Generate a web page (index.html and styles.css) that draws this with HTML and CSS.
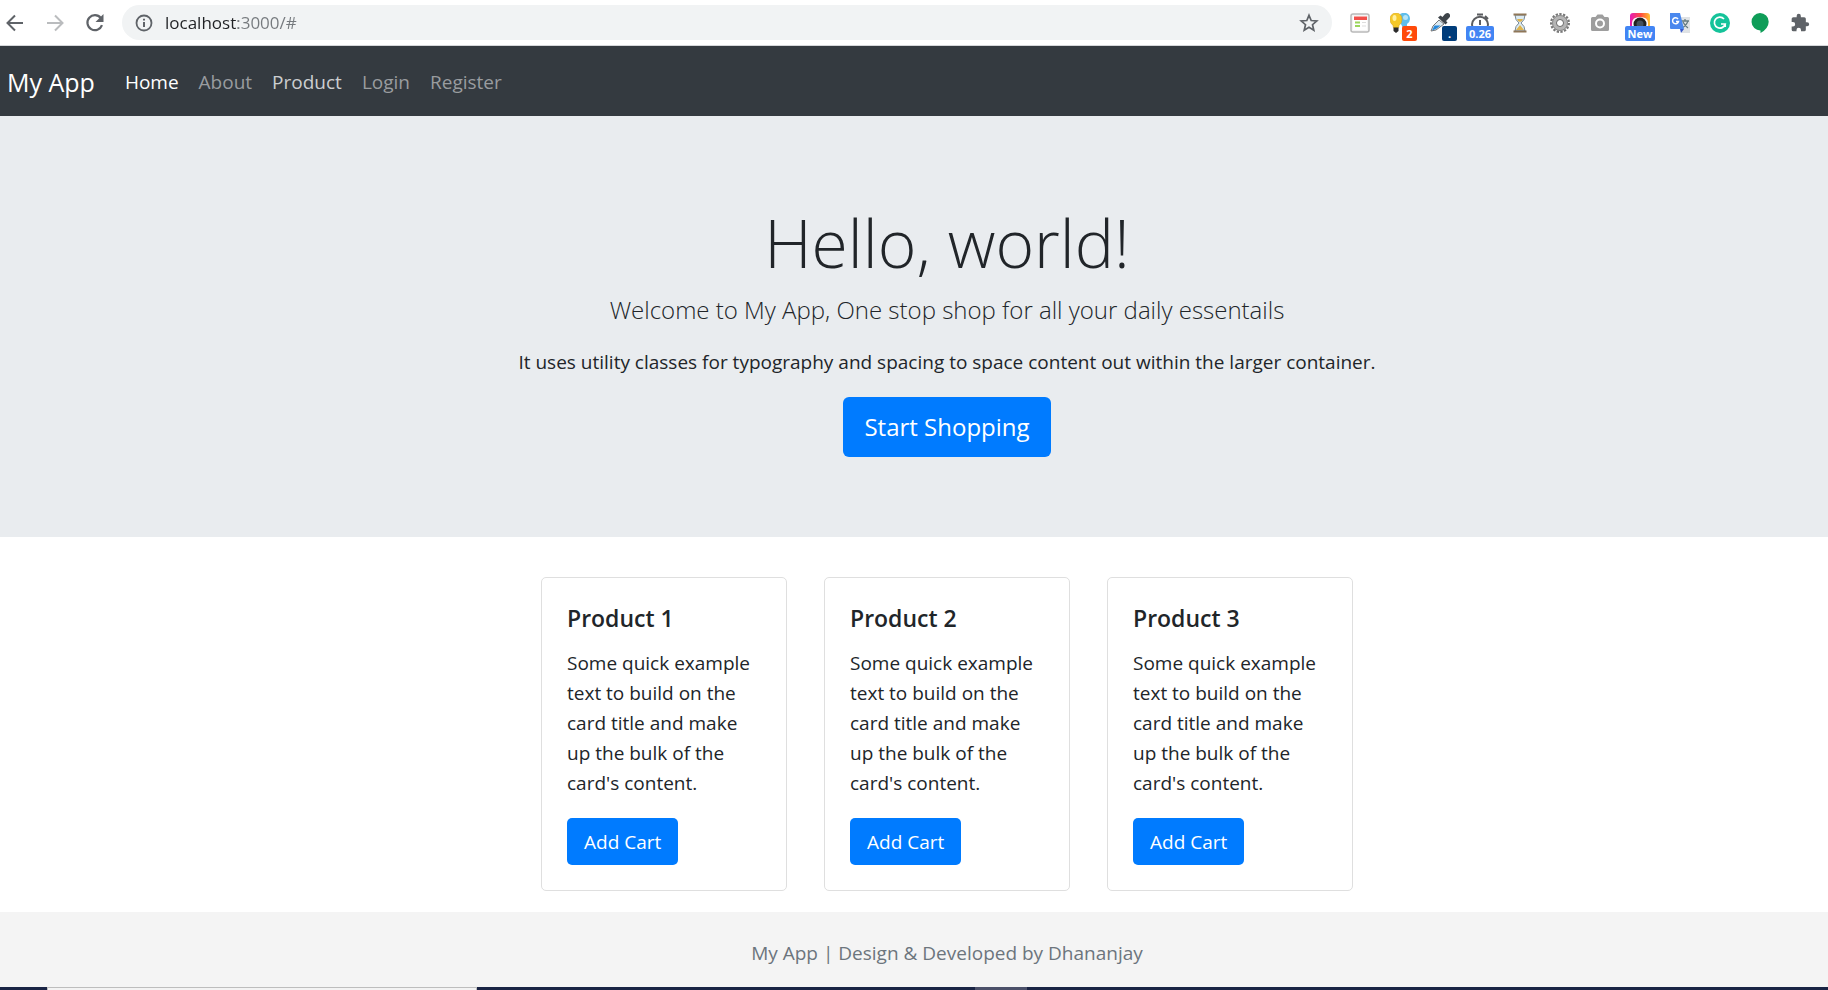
FILE: index.html
```html
<!DOCTYPE html>
<html lang="en">
<head>
<meta charset="utf-8">
<title>My App</title>
<link rel="stylesheet" href="styles.css">
</head>
<body>
<div class="toolbar">
  <div class="history">
    <button class="tool" aria-label="Back"><svg width="20" height="20" viewBox="0 0 20 20" fill="none" stroke="#5f6368" stroke-width="2"><path d="M18 10H3M10 2.500L2.500 10L10 17.500"/></svg></button>
    <button class="tool" aria-label="Forward" disabled><svg width="20" height="20" viewBox="0 0 20 20" fill="none" stroke="#babcbe" stroke-width="2"><path d="M2 10H17M10 2.500L17.500 10L10 17.500"/></svg></button>
    <button class="tool" aria-label="Reload"><svg width="20" height="20" viewBox="0 0 20 20"><path d="M15.800 5A7.500 7.500 0 1 0 17 12.200" fill="none" stroke="#5f6368" stroke-width="2.200"/><path d="M18.500 1V9H10.500Z" fill="#5f6368"/></svg></button>
  </div>
  <div class="omnibox">
    <button class="site-info" aria-label="Site information"><svg width="18" height="18" viewBox="0 0 18 18"><circle cx="9" cy="9" r="7.500" fill="none" stroke="#5f6368" stroke-width="1.800"/><path d="M9 8V13M9 4.800V6.600" stroke="#5f6368" stroke-width="2"/></svg></button>
    <input class="url" type="text" aria-label="Address" value="localhost:3000/#">
    <button class="site-info" aria-label="Bookmark"><svg width="20" height="20" viewBox="0 0 20 20"><path d="M10 2.300L12.200 7.500L17.800 8L13.500 11.700L14.800 17.200L10 14.300L5.200 17.200L6.500 11.700L2.200 8L7.800 7.500Z" fill="none" stroke="#5f6368" stroke-width="1.700"/></svg></button>
  </div>
  <div class="extensions">
    <button class="ext" aria-label="Notes"><svg width="20" height="20" viewBox="0 0 20 20"><rect x="1" y="1" width="18" height="18" rx="2" fill="#f4f4f4" stroke="#b9b9b9" stroke-width="1.500"/><rect x="3" y="3" width="14" height="14" fill="#fff"/><path d="M4 3.500H17V7H4Z" fill="#f2504b"/><path d="M5 9.500H10M5 13H10" stroke="#9bd65b" stroke-width="2"/><path d="M12 9.500H16M12 13H16" stroke="#ddd"/></svg></button>
    <button class="ext" aria-label="Ideas"><svg width="20" height="20" viewBox="0 0 20 20"><path d="M9 2Q12-1 16 0Q20 1.500 20 6Q20 9 17 11V15H13L10 9Z" fill="#5fbdea"/><circle cx="15.500" cy="4.500" r="2.500" fill="#b4e4f8"/><path d="M6 0Q12 .5 12 6.500Q12 10 9 12.500L8.500 15H3.500L3 12.500Q0 10 0 6.500Q0 .5 6 0Z" fill="#f6c928" stroke="#d6a41d" stroke-width=".6"/><ellipse cx="4.500" cy="5" rx="2" ry="3" fill="#fff0a0"/><path d="M3.500 14.500H8.500V18L6 20L3.500 18Z" fill="#2b2b2b"/></svg><span class="badge badge-red">2</span></button>
    <button class="ext" aria-label="Color picker"><svg width="20" height="20" viewBox="0 0 20 20"><path d="M9 7L3 13L1 18L6 17L14 11Z" fill="#dceaf2" stroke="#777"/><path d="M4.500 12.500H10.500L6 16L2 17.500Z" fill="#2588dc"/><path d="M8 4.500L10.500 2.500L12.500 4L15 1Q18-1 19.500 1Q21 3 19 5L16 8L17.500 9.500L15.500 11.500Z" fill="#3e444a"/></svg><span class="badge badge-navy">.</span></button>
    <button class="ext" aria-label="Page load time"><svg width="20" height="20" viewBox="0 0 20 20" fill="none" stroke="#5b5d60" stroke-width="2"><path d="M7 1.500H13M10 7V12M4 17A8 8 0 1 1 16 17M15 3L18 6"/></svg><span class="badge badge-blue">0.26</span></button>
    <button class="ext" aria-label="Hourglass"><svg width="20" height="20" viewBox="0 0 20 20"><path d="M5 2H15Q15 7 11 10Q15 13 15 18H5Q5 13 9 10Q5 7 5 2Z" fill="#dbeaf2" stroke="#788894"/><path d="M7 6H13Q12 9 10 9Q8 9 7 6M10 12L14 17H6Z" fill="#dfb44d"/><path d="M3.500 1.500H16.500M3.500 18.500H16.500" stroke="#8f7758" stroke-width="2"/></svg></button>
    <button class="ext" aria-label="Settings"><svg width="20" height="20" viewBox="0 0 20 20"><circle cx="10" cy="10" r="8.500" fill="none" stroke="#777" stroke-width="3" stroke-dasharray="2.200 1.360"/><circle cx="10" cy="10" r="5.500" fill="none" stroke="#b5b5b5" stroke-width="5"/><circle cx="10" cy="10" r="7.500" fill="none" stroke="#8c8c8c"/><circle cx="10" cy="10" r="3.500" fill="none" stroke="#707070"/><circle cx="10" cy="10" r="2.500" fill="#fff"/></svg></button>
    <button class="ext" aria-label="Screenshot"><svg width="20" height="20" viewBox="0 0 20 20"><path d="M2.500 4H5.500L7.500 1.500H12.500L14.500 4H17.500Q19 4 19 5.500V16.500Q19 18 17.500 18H2.500Q1 18 1 16.500V5.500Q1 4 2.500 4Z" fill="#9e9e9e"/><circle cx="10" cy="10.500" r="4" fill="#9e9e9e" stroke="#fff" stroke-width="2"/></svg></button>
    <button class="ext" aria-label="Photo tool"><svg width="20" height="20" viewBox="0 0 20 20"><defs><linearGradient id="photo"><stop offset="0" stop-color="#e619b7"/><stop offset=".55" stop-color="#ff4e3d"/><stop offset="1" stop-color="#ffc530"/></linearGradient></defs><rect width="20" height="20" rx="3" fill="url(#photo)"/><path d="M2 20V10Q2 4 10 4Q18 4 18 10V20Z" fill="#fff"/><circle cx="10" cy="11" r="6.500" fill="#222"/><circle cx="10" cy="11" r="3.500" fill="#45515b"/></svg><span class="badge badge-blue badge-wide">New</span></button>
    <button class="ext" aria-label="Translate"><svg width="20" height="20" viewBox="0 0 20 20"><path d="M8 4H20V20H12Z" fill="#dfe2e5"/><path d="M11 8H19M15 6V8M18 8Q16 13 12 15M13 9Q15 13 18 15" fill="none" stroke="#657b80" stroke-width="1.300"/><path d="M0 0H10L14 16H1Q0 16 0 15Z" fill="#4a88ee"/><path d="M10 16H14L11 20Z" fill="#3557c8"/><path d="M8 6A3 3 0 1 0 8.500 8.500H6" fill="none" stroke="#fff" stroke-width="1.500"/></svg></button>
    <button class="ext" aria-label="Writing assistant"><svg width="20" height="20" viewBox="0 0 20 20"><circle cx="10" cy="10" r="10" fill="#15c39a"/><path d="M14 6A5.500 5.500 0 1 0 15.200 11H11M15.200 10.500V14" fill="none" stroke="#fff" stroke-width="1.700"/></svg></button>
    <button class="ext" aria-label="Chat"><svg width="20" height="20" viewBox="0 0 20 20"><path d="M10 0A8.700 8.700 0 0 1 18.700 8.700Q18.500 15.500 10.500 20V17.400A8.700 8.700 0 1 1 10 0Z" fill="#0f9d58"/></svg></button>
    <button class="ext" aria-label="Extensions"><svg width="20" height="20" viewBox="0 0 24 24"><path d="M20.500 11H19V7a2 2 0 0 0-2-2h-4V3.500a2.500 2.500 0 0 0-5 0V5H4a2 2 0 0 0-2 2v3.800h1.500a2.700 2.700 0 0 1 0 5.400H2V20a2 2 0 0 0 2 2h3.800v-1.500a2.700 2.700 0 0 1 5.400 0V22H17a2 2 0 0 0 2-2v-4h1.500a2.500 2.500 0 0 0 0-5z" fill="#5f6368"/></svg></button>
  </div>
</div>
<nav class="navbar">
  <a class="brand" href="#">My App</a>
  <a class="nav-link active" href="#">Home</a>
  <a class="nav-link" href="#">About</a>
  <a class="nav-link hovered" href="#">Product</a>
  <a class="nav-link" href="#">Login</a>
  <a class="nav-link" href="#">Register</a>
</nav>
<main>
  <section class="hero">
    <h1>Hello, world!</h1>
    <p class="lead">Welcome to My App, One stop shop for all your daily essentails</p>
    <p class="intro">It uses utility classes for typography and spacing to space content out within the larger container.</p>
    <a class="btn btn-large" href="#">Start Shopping</a>
  </section>
  <section class="products">
    <article class="card">
      <h2>Product 1</h2>
      <p>Some quick example text to build on the card title and make up the bulk of the card's content.</p>
      <a class="btn" href="#">Add Cart</a>
    </article>
    <article class="card">
      <h2>Product 2</h2>
      <p>Some quick example text to build on the card title and make up the bulk of the card's content.</p>
      <a class="btn" href="#">Add Cart</a>
    </article>
    <article class="card">
      <h2>Product 3</h2>
      <p>Some quick example text to build on the card title and make up the bulk of the card's content.</p>
      <a class="btn" href="#">Add Cart</a>
    </article>
  </section>
</main>
<footer class="footer">My App | Design &amp; Developed by Dhananjay</footer>
<div class="taskbar"><div class="task-search"></div><div class="task-active"></div></div>
</body>
</html>
```
FILE: styles.css
```css
* { box-sizing: border-box; }

body {
  margin: 0;
  min-height: 100vh;
  display: flex;
  flex-direction: column;
  background: #fff;
  color: #212529;
  font: 19px/30px "Open Sans", "Noto Sans", sans-serif;
}

h1, h2, p { margin: 0; }
a { text-decoration: none; }
svg { display: block; }

button {
  border: 0;
  padding: 0;
  background: none;
  font-family: inherit;
}

/* Browser toolbar */
.toolbar {
  display: flex;
  align-items: center;
  height: 46px;
  padding-right: 8px;
  border-bottom: 1px solid #d5d7da;
}

.history { display: flex; gap: 10px; margin-right: 12px; }
.tool { display: grid; place-items: center; width: 30px; height: 34px; }

.omnibox {
  display: flex;
  align-items: center;
  flex: 1;
  height: 35px;
  margin-right: 8px;
  padding: 0 13px;
  border-radius: 18px;
  background: #f1f3f4;
}

.url {
  flex: 1;
  min-width: 0;
  margin-left: 12px;
  padding: 0;
  border: 0;
  outline: 0;
  font: 17px/24px "Open Sans", "Noto Sans", sans-serif;
  color: transparent;
  background: linear-gradient(90deg, #202124 73px, #75797d 73px);
  -webkit-background-clip: text;
  background-clip: text;
}

.extensions { display: flex; }
.ext { position: relative; display: grid; place-items: center; width: 40px; height: 34px; }

.badge {
  position: absolute;
  top: 20px;
  height: 15px;
  border-radius: 2px;
  color: #fff;
  font-size: 11px;
  font-weight: 700;
  line-height: 15px;
  text-align: center;
}

.badge-red { left: 22px; width: 15px; background: #ff4a0a; }
.badge-navy { left: 22px; width: 15px; background: #003c7a; }
.badge-blue { left: 6px; width: 28px; background: #4285f4; }
.badge-wide { left: 5px; width: 30px; }

/* Navigation */
.navbar {
  display: flex;
  align-items: center;
  min-height: 70px;
  padding: 10px 7px;
  background: #343a40;
}

.brand { margin-right: 20px; padding: 7px 0 5px; color: #fff; font-size: 25px; line-height: 38px; }
.nav-link { padding: 11px 10px 9px; color: #999c9f; }
.nav-link.active { color: #fff; }
.nav-link.hovered { color: #ccced0; }

/* Hero */
.hero {
  display: flex;
  flex-direction: column;
  align-items: center;
  padding: 84px 0 80px 66px;
  background: #e9ecef;
  text-align: center;
}

.hero h1 { margin-bottom: 7px; font-size: 66px; font-weight: 300; line-height: 84px; }
.lead { margin-bottom: 18px; font-size: 24px; font-weight: 300; line-height: 38px; }
.intro { margin-bottom: 20px; }

.btn {
  display: inline-block;
  padding: 9px 17px 8px;
  border-radius: 5px;
  background: #007bff;
  color: #fff;
}

.btn-large { padding: 11px 21px; border-radius: 6px; font-size: 24px; line-height: 38px; }

/* Products */
.products {
  display: flex;
  justify-content: center;
  gap: 37px;
  padding: 40px 0 21px 66px;
}

.card {
  width: 246px;
  padding: 25px;
  border: 1px solid #dfdfdf;
  border-radius: 5px;
}

.card h2 { margin-bottom: 15px; font-size: 23px; font-weight: 600; line-height: 30px; }
.card p { margin-bottom: 20px; }

.footer {
  flex: 1;
  padding: 26px 0 17px 66px;
  background: #f4f4f4;
  color: #6c757d;
  text-align: center;
}

/* Top edge of the desktop taskbar */
.taskbar { display: flex; flex-shrink: 0; height: 3px; padding-left: 47px; background: #1a2444; }
.task-search { width: 430px; margin-right: 498px; border: 1px solid #bdbdbd; border-bottom: 0; background: #f3f3f3; }
.task-active { width: 52px; background: #4b5069; }
```
